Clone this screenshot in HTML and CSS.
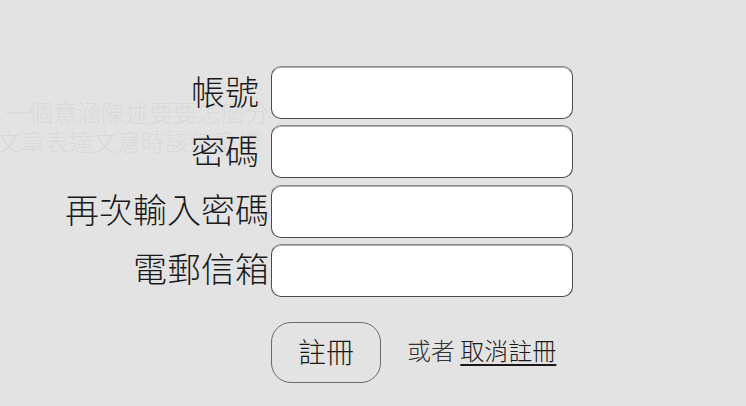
FILE: index.html
```html
<!DOCTYPE html>
<html lang="zh-Hant">
<head>
<meta charset="utf-8">
<link rel="stylesheet" href="styles.css">
</head>
<body>
<div class="page">
  <p class="ghost"><span class="ghost-line first">一個意涵陳述要要怎麼分</span><span class="ghost-line">文章表達文意時該怎麼樣</span></p>
  <form class="form">
    <label class="label short" for="acc">帳號</label>
    <input class="field" id="acc" type="text">
    <label class="label short" for="pw">密碼</label>
    <input class="field" id="pw" type="password">
    <label class="label" for="pw2">再次輸入密碼</label>
    <input class="field" id="pw2" type="password">
    <label class="label" for="mail">電郵信箱</label>
    <input class="field" id="mail" type="email">
    <div class="actions">
      <button class="submit" type="button">註冊</button>
      <span class="or">或者 <a class="cancel" href="#">取消註冊</a></span>
    </div>
  </form>
</div>
</body>
</html>
```

FILE: styles.css
```css
html, body {
  margin: 0;
  padding: 0;
  background: #e3e3e3;
}
body {
  font-family: "Noto Sans CJK TC", "Noto Sans", sans-serif;
  font-weight: 200;
  color: #1a1a1a;
}
.page {
  position: relative;
  width: 746px;
  height: 406px;
  overflow: hidden;
}
.ghost {
  position: absolute;
  left: 5px;
  top: 97px;
  margin: 0;
  font-size: 24px;
  line-height: 29px;
  color: #d9d9d9;
  white-space: nowrap;
}
.ghost-line {
  display: block;
}
.ghost-line:not(.first) {
  margin-left: -8px;
}
.form {
  position: relative;
  display: grid;
  grid-template-columns: 271px 302px;
  row-gap: 6.33px;
  padding-top: 66px;
  align-items: center;
}
.label {
  text-align: right;
  font-size: 34px;
  line-height: 40px;
  padding-right: 2px;
  margin-top: -4px;
}
.label.short {
  padding-right: 12px;
}
.field {
  box-sizing: border-box;
  height: 53px;
  width: 302px;
  margin: 0;
  background: #fff;
  border: 1px solid #4a4a4a;
  border-top-color: #8a8a8a;
  box-shadow: inset 0 1px 0 #b0b0b0;
  border-radius: 10px;
}
.actions {
  grid-column: 2;
  display: flex;
  align-items: center;
  gap: 26px;
  margin-top: 19px;
}
.submit {
  box-sizing: border-box;
  width: 110px;
  height: 61px;
  border: 1px solid #6a6a6a;
  border-radius: 20px;
  background: transparent;
  font-family: inherit;
  font-weight: 200;
  font-size: 28px;
  color: #1a1a1a;
  padding: 0 0 4px;
}
.or {
  font-size: 24px;
  color: #333;
  margin-top: -6px;
}
.cancel {
  color: #1a1a1a;
  text-decoration: underline;
  text-underline-offset: 4px;
}
```
